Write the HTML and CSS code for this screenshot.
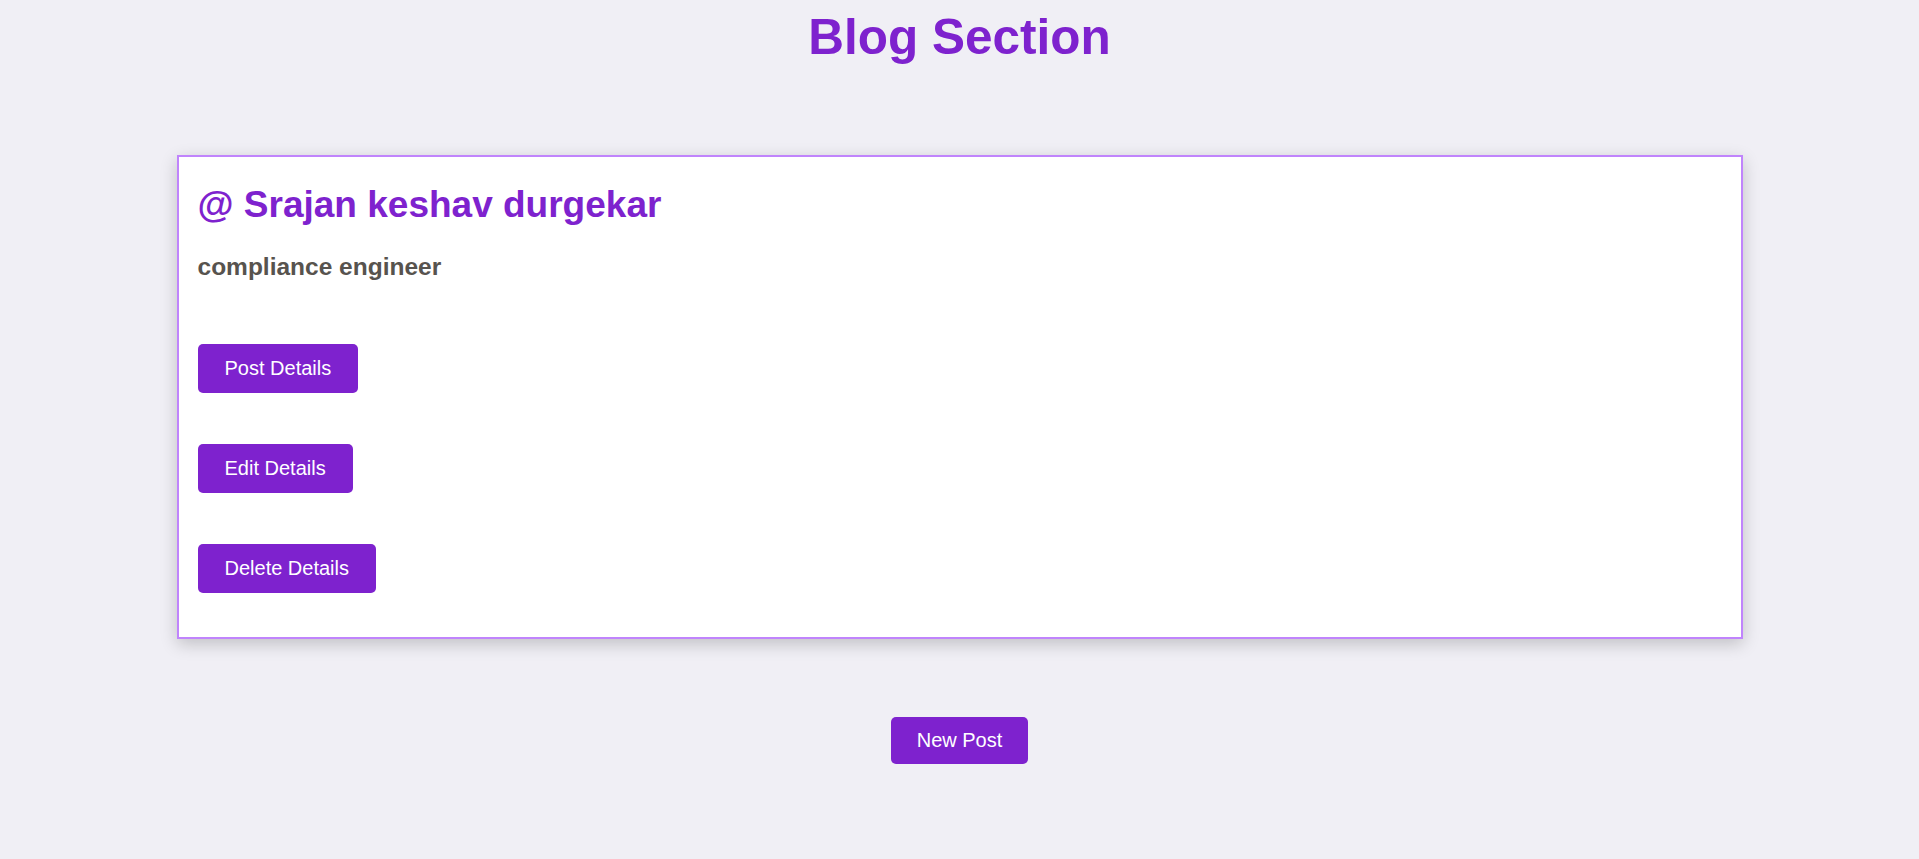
FILE: index.html
```html
<!DOCTYPE html>
<html>
<head>
<meta charset="utf-8">
<title>Blog Section</title>
<link rel="stylesheet" href="styles.css">
</head>
<body>
<h1 class="page-title">Blog Section</h1>
<div class="post-card">
  <h2 class="post-author">@ Srajan keshav durgekar</h2>
  <p class="post-role">compliance engineer</p>
  <div class="post-actions">
    <button class="btn">Post Details</button>
    <button class="btn">Edit Details</button>
    <button class="btn">Delete Details</button>
  </div>
</div>
<div class="footer-actions">
  <button class="btn btn-new">New Post</button>
</div>
</body>
</html>
```
FILE: styles.css
```css
body {
  margin: 0;
  background: #f0eff5;
  font-family: "Liberation Sans", Arial, sans-serif;
}
.page-title {
  margin: 9px 0 0;
  text-align: center;
  font-size: 49.5px;
  line-height: 55px;
  font-weight: 700;
  color: #7e22ce;
}
.post-card {
  width: 1524px;
  margin: 91px auto 0;
  background: #fff;
  border: 2px solid #c084fc;
  box-shadow: 0 5px 16px rgba(0, 0, 0, 0.2);
  padding: 27px 19px 44px;
}
.post-author {
  margin: 0;
  font-size: 37px;
  line-height: 42px;
  font-weight: 700;
  color: #7e22ce;
}
.post-role {
  margin: 27px 0 0;
  font-size: 24.5px;
  line-height: 28px;
  font-weight: 700;
  color: #57534e;
}
.post-actions {
  margin-top: 63px;
  display: flex;
  flex-direction: column;
  align-items: flex-start;
  gap: 51px;
}
.btn {
  font-family: "Liberation Sans", Arial, sans-serif;
  font-size: 20px;
  line-height: 23px;
  padding: 13px 27px;
  color: #fff;
  background: #7e22ce;
  border: none;
  border-radius: 5px;
}
.footer-actions {
  margin-top: 78px;
  display: flex;
  justify-content: center;
}
.btn-new {
  padding: 12px 25.5px;
}
```
